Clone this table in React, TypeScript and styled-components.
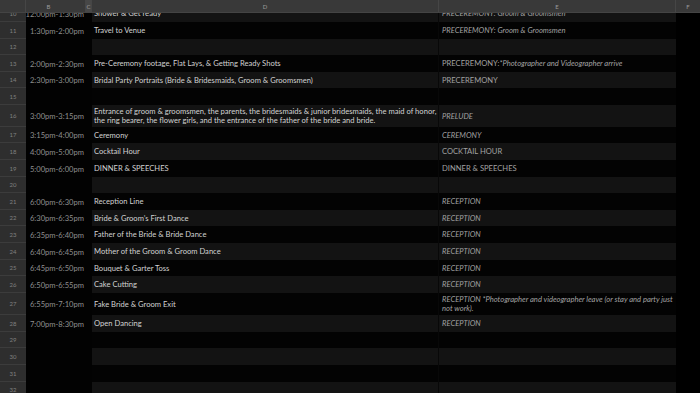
import React from 'react';
import styled, { createGlobalStyle } from 'styled-components';

const COLS = '26px 60px 6px 347px 237px 24px';

const GlobalStyle = createGlobalStyle`
  html, body { margin: 0; padding: 0; background: #000; }
  body { font-family: Lato, "Open Sans", sans-serif; }
`;

const Sheet = styled.div`
  width: 700px;
  height: 393px;
  display: flex;
  flex-direction: column;
  overflow: hidden;
  background: #000;
`;

const ColumnHeader = styled.div`
  display: grid;
  grid-template-columns: ${COLS};
  height: 13px;
  flex: none;
  background: #393939;
  border-bottom: 1px solid #444;
  box-sizing: border-box;
`;

const HeaderCell = styled.div<{ $shift?: number; $active?: boolean }>`
  display: flex;
  align-items: center;
  justify-content: center;
  padding-right: ${(p) => p.$shift ?? 0}px;
  font-size: 6px;
  color: #9a9a9a;
  background: ${(p) => (p.$active ? '#474747' : 'transparent')};
  border-right: 1px solid #464646;
  box-sizing: border-box;
  &:last-child { border-right: none; }
`;

const Viewport = styled.div`
  flex: 1;
  overflow: hidden;
`;

const Rows = styled.div`
  margin-top: -8px;
`;

const Row = styled.div<{ $h: number }>`
  display: grid;
  grid-template-columns: ${COLS};
  height: ${(p) => p.$h}px;
`;

const RowLabel = styled.div`
  display: flex;
  align-items: center;
  justify-content: center;
  background: #2e2e2e;
  border-bottom: 1px solid #3c3c3c;
  box-sizing: border-box;
  font-size: 6px;
  color: #808080;
`;

const TimeCell = styled.div`
  display: flex;
  align-items: center;
  justify-content: flex-end;
  padding-right: 2px;
  background: #020202;
  font-size: 7.6px;
  color: #8f8f8f;
  white-space: nowrap;
  overflow: hidden;
`;

const SpacerCell = styled.div`
  background: #020202;
`;

const DescCell = styled.div<{ $band: boolean }>`
  display: flex;
  align-items: center;
  padding-left: 2px;
  background: ${(p) => (p.$band ? '#131313' : '#030303')};
  font-size: 7.6px;
  line-height: 9px;
  color: #d2d2d2;
  white-space: nowrap;
  overflow: hidden;
  border-right: 1px solid #080808;
`;

const NoteCell = styled.div<{ $band: boolean; $italic: boolean }>`
  display: flex;
  align-items: center;
  padding-left: 3px;
  background: ${(p) => (p.$band ? '#131313' : '#030303')};
  font-size: 7.6px;
  line-height: 9px;
  color: #a2a2a2;
  font-style: ${(p) => (p.$italic ? 'italic' : 'normal')};
  white-space: nowrap;
  overflow: hidden;
`;

const Emph = styled.span`
  font-style: italic;
`;

const EdgeCell = styled.div`
  background: #000;
`;

type RowData = {
  n: number;
  h: number;
  time?: string;
  desc?: React.ReactNode;
  note?: React.ReactNode;
  italic?: boolean;
};

const rows: RowData[] = [
  { n: 10, h: 17, time: '12:00pm-1:30pm', desc: 'Shower & Get ready', note: 'PRECEREMONY: Groom & Groomsmen', italic: true },
  { n: 11, h: 17, time: '1:30pm-2:00pm', desc: 'Travel to Venue', note: 'PRECEREMONY: Groom & Groomsmen', italic: true },
  { n: 12, h: 16 },
  {
    n: 13,
    h: 17,
    time: '2:00pm-2:30pm',
    desc: 'Pre-Ceremony footage, Flat Lays, & Getting Ready Shots',
    note: (
      <>
        PRECEREMONY: <Emph>*Photographer and Videographer arrive</Emph>
      </>
    ),
    italic: false,
  },
  { n: 14, h: 16, time: '2:30pm-3:00pm', desc: 'Bridal Party Portraits (Bride & Bridesmaids, Groom & Groomsmen)', note: 'PRECEREMONY', italic: false },
  { n: 15, h: 17 },
  {
    n: 16,
    h: 22,
    time: '3:00pm-3:15pm',
    desc: (
      <span>
        Entrance of groom &amp; groomsmen, the parents, the bridesmaids &amp; junior bridesmaids, the maid of honor,
        <br />
        the ring bearer, the flower girls, and the entrance of the father of the bride and bride.
      </span>
    ),
    note: 'PRELUDE',
    italic: true,
  },
  { n: 17, h: 16, time: '3:15pm-4:00pm', desc: 'Ceremony', note: 'CEREMONY', italic: true },
  { n: 18, h: 17, time: '4:00pm-5:00pm', desc: 'Cocktail Hour', note: 'COCKTAIL HOUR', italic: false },
  { n: 19, h: 17, time: '5:00pm-6:00pm', desc: 'DINNER & SPEECHES', note: 'DINNER & SPEECHES', italic: false },
  { n: 20, h: 16 },
  { n: 21, h: 17, time: '6:00pm-6:30pm', desc: 'Reception Line', note: 'RECEPTION', italic: true },
  { n: 22, h: 16, time: '6:30pm-6:35pm', desc: 'Bride & Groom\u2019s First Dance', note: 'RECEPTION', italic: true },
  { n: 23, h: 17, time: '6:35pm-6:40pm', desc: 'Father of the Bride & Bride Dance', note: 'RECEPTION', italic: true },
  { n: 24, h: 17, time: '6:40pm-6:45pm', desc: 'Mother of the Groom & Groom Dance', note: 'RECEPTION', italic: true },
  { n: 25, h: 16, time: '6:45pm-6:50pm', desc: 'Bouquet & Garter Toss', note: 'RECEPTION', italic: true },
  { n: 26, h: 17, time: '6:50pm-6:55pm', desc: 'Cake Cutting', note: 'RECEPTION', italic: true },
  {
    n: 27,
    h: 22,
    time: '6:55pm-7:10pm',
    desc: 'Fake Bride & Groom Exit',
    note: (
      <span>
        RECEPTION *Photographer and videographer leave (or stay and party just
        <br />
        not work).
      </span>
    ),
    italic: true,
  },
  { n: 28, h: 17, time: '7:00pm-8:30pm', desc: 'Open Dancing', note: 'RECEPTION', italic: true },
  { n: 29, h: 16 },
  { n: 30, h: 17 },
  { n: 31, h: 17 },
  { n: 32, h: 16 },
];

export default function App() {
  return (
    <>
      <GlobalStyle />
      <Sheet>
        <ColumnHeader>
          <HeaderCell />
          <HeaderCell $shift={14}>B</HeaderCell>
          <HeaderCell $active>C</HeaderCell>
          <HeaderCell>D</HeaderCell>
          <HeaderCell>E</HeaderCell>
          <HeaderCell>F</HeaderCell>
        </ColumnHeader>
        <Viewport>
          <Rows>
            {rows.map((r) => {
              const band = r.n % 2 === 0;
              return (
                <Row key={r.n} $h={r.h}>
                  <RowLabel>{r.n}</RowLabel>
                  <TimeCell>{r.time}</TimeCell>
                  <SpacerCell />
                  <DescCell $band={band}>{r.desc}</DescCell>
                  <NoteCell $band={band} $italic={!!r.italic}>
                    {r.note}
                  </NoteCell>
                  <EdgeCell />
                </Row>
              );
            })}
          </Rows>
        </Viewport>
      </Sheet>
    </>
  );
}
